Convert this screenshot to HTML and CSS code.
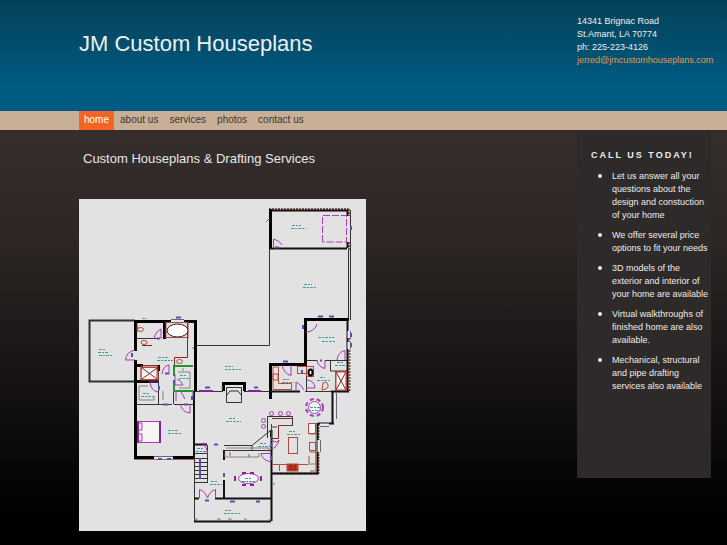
FILE: index.html
```html
<!DOCTYPE html>
<html lang="en">
<head>
<meta charset="utf-8">
<title>JM Custom Houseplans</title>
<meta name="viewport" content="width=device-width, initial-scale=1">
<link rel="stylesheet" href="styles.css">
</head>
<body>
<header class="header wrap">
  <h1 class="site-title">JM Custom Houseplans</h1>
  <address class="contact">
    14341 Brignac Road<br>
    St.Amant, LA 70774<br>
    ph: 225-223-4126<br>
    <a href="mailto:jerred@jmcustomhouseplans.com">jerred@jmcustomhouseplans.com</a>
  </address>
</header>
<nav class="nav">
  <ul class="wrap nav-list">
    <li><a class="active" href="#">home</a></li>
    <li><a href="#">about us</a></li>
    <li><a href="#">services</a></li>
    <li><a href="#">photos</a></li>
    <li><a href="#">contact us</a></li>
  </ul>
</nav>
<div class="page wrap">
  <main class="content">
    <h2 class="tagline">Custom Houseplans &amp; Drafting Services</h2>
    <svg class="plan" viewBox="79 199 287 332" role="img" aria-label="Floor plan">
      <rect class="paper" x="79" y="199" width="287" height="332"/>
      <!-- rear porch and patio outlines -->
      <g class="thin">
        <path class="porch" d="M135 320.500H89.500V381.500H135"/>
        <path d="M196 345.500H269.500V248M194.500 391V521M348.500 248V320M350.500 210V320"/>
        <path d="M158 404.500H172M174 404.500H194M135 404.500H158.500V365M173.500 391V404M135 365.500H158M135 338.500H157"/>
        <path d="M306 360.500H317M325 360.500H347M330.500 360V371H347M306.500 365V391M195 391.500H223M244 391.500H270M270 391.500H295M305 391.500H349"/>
        <path d="M224 445.500H252L271 430M223 450.500H271M252 446V450M194 444.500H207M194 453.500H208M207.500 445V483"/>
        <path d="M195 458.500H207M195 462.500H207M195 466.500H207M195 470.500H207M195 474.500H207M195 478.500H207M195 482.500H208"/>
      </g>
      <!-- hatched brick walls -->
      <g class="brick">
        <path d="M269 209H350M349 209V216M349 242V250M349.500 332V392M271 473.500H319M318.500 424V474"/>
      </g>
      <!-- main walls -->
      <g class="wall">
        <path d="M134 321.500H195.500V391M135.500 321V351M135.500 360V457.500H194M164.500 322V339M135 365.500H143M158.500 365V371M135 381.500H158"/>
        <path d="M270.500 209V248.500M305.500 319V364.500H269M270.500 364V399M304 319.500H349M223.500 391V383.500H244.500V391"/>
      </g>
      <path class="brick-line" d="M134 459.500H194"/>
      <g class="mid">
        <path d="M270 210.500H348M269 248.500H347M347.500 210V216M347.500 242V248M347.500 319V392M269 391.500H300M331 391.500H349M332.500 391V423M318 423.500H334M317.500 423V473.500H271M271.500 430V521M194 521.500H271M194 498.500H199M215 498.500H271M224 450V460M224 480V498M194 444.500H207M194 391V457M271 430V437"/>
      </g>
      <!-- windows -->
      <g class="window">
        <path d="M171 320.500H184M154 457.500H173M349 331V338M349 342V349M335.500 395V401M335.500 404V410M335.500 413V419M319 440V452M320 425H329"/>
      </g>
      <g class="window-edge">
        <path d="M171 319.500H184M154 456.500H173M350.500 331V338M350.500 342V349M336.500 393V419M320.500 440V452M320 426.500H329"/>
      </g>
      <!-- walk-in closet -->
      <path class="green" d="M174 366H193M174 365V376M174 383V391H193.500"/>
      <path class="green-thin" d="M228 519H231V521M194 519H197V521M217 519H220V521M244 519H246V521M269 519V521M193 347V349M272 485L275 483M266 222L269 219"/>
      <path class="grey" d="M139 386V400H154V396M178 372H190V388H179M139 386H148M183 368V371M226 448H269V452M163 391V400M225 453V457H259V453M309 434H316V464H308M222 386V390"/>
      <!-- bathroom fixtures and kitchen cabinets -->
      <g class="red">
        <rect x="166" y="322.500" width="22" height="15"/>
        <path class="dark" d="M187.500 323V357.500H174.500V365M142 345.500H152M137 327V332M137 323V329"/>
        <rect class="white" x="141" y="367.500" width="16" height="12"/>
        <path d="M141 380H158V366H141Z"/>
        <path class="dark" d="M142 368L157 379M157 368L142 379"/>
        <ellipse cx="144" cy="342.500" rx="3" ry="2"/>
        <ellipse cx="140.500" cy="329.500" rx="3" ry="2"/>
        <ellipse cx="179.500" cy="361.500" rx="3" ry="2"/>
        <rect class="white" x="335.500" y="371.500" width="11" height="19"/>
        <path d="M336 372H346V390H336Z"/>
        <path class="dark" d="M336 372L346 390M346 372L336 390"/>
        <rect x="297.500" y="366.500" width="9" height="7"/>
        <rect x="306.500" y="366.500" width="7" height="10"/>
        <path d="M273 367V389.500H291.500V383.500H278.500V367ZM273 374H278V380H273Z"/>
        <path d="M322 390L323 383Q327 381 328 385T322 390"/>
        <rect x="288.500" y="437.500" width="9" height="16"/>
        <path class="dark" d="M272 418.500H292.500V425.500H278.500V438.500H271.500V424M272 427H277"/>
        <rect class="white" x="308.500" y="423.500" width="7" height="10"/>
        <rect x="309.500" y="442.500" width="6" height="8"/>
        <path d="M272 464.500H279.500V471M280 464.500H308M309 456V463M309.500 452H316V471H310M230 452V456M249 454V457"/>
        <rect class="stove" x="287" y="464" width="11" height="7"/>
        <path class="dark" d="M288 466H297M288 469H297M291 464V471M295 464V471"/>
      </g>
      <ellipse class="black" cx="310.500" cy="372.500" rx="2" ry="3"/>
      <ellipse class="tub" cx="177.500" cy="330.500" rx="10.500" ry="6.500"/>
      <!-- fireplace -->
      <path class="thin" d="M226.500 387.500H241.500V402.500H226.500ZM227 395L230 391H238L241 395"/>
      <path class="thin" d="M267.500 438V416.500H292.500V426"/>
      <!-- doors, beds, tables -->
      <g class="purple">
        <path d="M135 350Q126 352 125.500 360H135M154 339Q155 332 161 329V339M162 374Q163 366 169 365V374M158 382H150Q151 391 158 392M175 374V385H183Q181 380 177 379"/>
        <path d="M181 392L185 399M180 404Q183 413 190 413V404M176 392V401M193 392V400"/>
        <path d="M273.500 247V239Q279 240 282 245M282 365Q284 374 291 375.500V365M306 332H307Q315 331 317 324M317 360Q318 367 325 368.500V360M337 360Q338 352 345 350.500V360M307 380Q315 381 315 388H306M296 391V382Q301 384 304 390"/>
        <path class="dash" d="M322.500 242V215.500H346.500V242Z"/>
        <path d="M271 440Q278 444 279 440Q277 448 271 449M271 462Q262 460 261 453.500H271M199.500 498V489.500Q205 491 207.500 498Q210 491 215.500 489.500V498M202 444Q208 447 207 454"/>
        <circle cx="271.500" cy="413.500" r="2"/><circle cx="280.500" cy="413.500" r="2"/><circle cx="288.500" cy="413.500" r="2"/>
        <circle cx="263.500" cy="420.500" r="2"/><circle cx="263.500" cy="426.500" r="2"/>
        <ellipse class="white" cx="248.500" cy="478.500" rx="10" ry="5"/>
        <path class="bold" d="M242 473H246M250 473H254M242 485H246M250 485H254M235 476V481M261 476V481"/>
        <circle class="white" cx="314.500" cy="407.500" r="6"/>
        <circle class="chairs" cx="314.500" cy="407.500" r="8.500"/>
        <rect class="white" x="137.500" y="421.500" width="22" height="21"/>
        <path class="bold" d="M138 421V443M160 421V443"/>
        <path d="M139 423H142V430H139M139 434H142V441H139"/>
        <path class="bold" d="M199 391H213M248 391H261M202 444H205"/>
      </g>
      <!-- room and opening marks -->
      <g class="mark">
        <path d="M292 225.500H301M291 228.500H306M304 284.500H312M303 287.500H317M99 349.500H106M98 352.500H108M99 355.500H113M158 357.500H168M157 360.500H173M168 430.500H178M168 433.500H182M225 366.500H233M225 369.500H241M229 418.500H235M226 421.500H241M318 337.500H334M322 341.500H336M283 379.500H290M282 382.500H294M289 431.500H296M287 434.500H301M320 377.500H325M317 380.500H331M337 362.500H343M335 365.500H346M260 443.500H267M258 446.500H270M310 407.500H320M308 410.500H321M245 478.500H252M242 481.500H256M225 510.500H232M224 513.500H240M211 481.500H218M210 484.500H222M197 448.500H204M196 451.500H206M180 375.500H186M179 378.500H189M143 393.500H149M141 396.500H154M142 318.500H147"/>
      </g>
      <g class="code">
        <path d="M176 317.500H181M158 459H162M167 459H171M157 338.500H160M165 373.500H169M159 386V390M163 404.500H168M184 404.500H188M132 353V357M205 387.500H210M214 444.500H218M205 500.500H209M254 387.500H258M283 361.500H288M318 316.500H323M329 316.500H334M303 325V329M351 226V230M351 333V337M351 343V347M302 370V374M320 360.500H322M275 247.500H279M271 443V447M271 456V460M230 501.500H235M256 501.500H260M224 473V477M174 380V383M192 396V400M200 458V479"/>
      </g>
    </svg>
  </main>
  <aside class="sidebar">
    <h3>CALL US TODAY!</h3>
    <ul>
      <li>Let us answer all your questions about the design and constuction of your home</li>
      <li>We offer several price options to fit your needs</li>
      <li>3D models of the exterior and interior of your home are available</li>
      <li>Virtual walkthroughs of finished home are also available.</li>
      <li>Mechanical, structural and pipe drafting services also available</li>
    </ul>
  </aside>
</div>
</body>
</html>
```
FILE: styles.css
```css
* {
  box-sizing: border-box;
}

html {
  background: #000;
}

body {
  margin: 0;
  color: #eee;
  font-family: "Liberation Sans", Arial, Helvetica, sans-serif;
  font-size: 9px;
  line-height: 13px;
}

h1, h2, h3, ul {
  margin: 0;
  padding: 0;
  font-weight: normal;
}

.wrap {
  padding-left: 79px;
  padding-right: 16px;
}

.header {
  display: grid;
  grid-template-columns: 1fr 134px;
  min-height: 111px;
  background: linear-gradient(#04425a 0, #04465f 15px, #005a82 85px, #005a82);
}

.site-title {
  padding-top: 31px;
  font-size: 22px;
  line-height: 26px;
}

.contact {
  padding-top: 15px;
  font-style: normal;
  white-space: nowrap;
}

.contact a {
  color: #e29a45;
  text-decoration: none;
}

.nav {
  background: #c8b098;
}

.nav-list {
  display: flex;
  gap: 1px;
  list-style: none;
}

.nav a {
  display: block;
  padding: 0 5px 1px;
  color: #40352d;
  font-size: 10px;
  line-height: 18px;
  text-decoration: none;
}

.nav a.active {
  background: #f26522;
  color: #fff;
}

.page {
  display: grid;
  grid-template-columns: 1fr 134px;
  align-items: start;
  padding-bottom: 14px;
  background: linear-gradient(#362e2c 0, #2d2625 110px, #000 390px);
}

.tagline {
  padding: 20px 4px 32px;
  font-size: 13px;
  line-height: 17px;
  color: #e8e8e8;
}

.plan {
  display: block;
  width: 100%;
  max-width: 287px;
}

.sidebar {
  min-height: 348px;
  padding: 19px 0 0 14px;
  background: #2e2a2a;
}

.sidebar h3 {
  font-size: 9px;
  font-weight: bold;
  letter-spacing: 2px;
  white-space: nowrap;
}

.sidebar ul {
  display: grid;
  gap: 6px;
  padding: 7px 0 0 21px;
}

.sidebar li::marker {
  font-size: 12px;
}

.plan path, .plan rect, .plan circle, .plan ellipse {
  fill: none;
}

.plan .paper { fill: #e2e2e2; }
.plan .white { fill: #f6f6f6; }
.thin, path.thin { stroke: #333; stroke-width: 1; }
.porch { stroke: #2c3330; stroke-width: 2; }
.wall { stroke: #000; stroke-width: 3; }
.mid { stroke: #111; stroke-width: 2; }
.brick { stroke: #86544c; stroke-width: 2; stroke-dasharray: 2 1; }
.brick-line { stroke: #a06a64; stroke-width: 1; }
.window { stroke: #e8e8f4; stroke-width: 3; }
.window-edge { stroke: #667; stroke-width: 1; }
.green { stroke: #22962e; stroke-width: 2; }
.green-thin { stroke: #3a9a50; stroke-width: 1; }
.grey { stroke: #85857c; stroke-width: 1; }
.red { stroke: #b5483f; stroke-width: 1; }
.red .dark { stroke: #7d2a22; }
.plan .stove { fill: #d03c18; }
.plan .tub { fill: #fff; stroke: #222; }
.plan .black { fill: #fff; stroke: #000; stroke-width: 2; }
.purple { stroke: #a73bb0; stroke-width: 1; }
.purple .bold { stroke: #8d1f96; stroke-width: 2; }
.purple .chairs { stroke-width: 2; stroke-dasharray: 4 3; }
.purple .dash { stroke: #b43bbb; stroke-dasharray: 7 2; }
.mark { stroke: #459b98; stroke-width: 1; stroke-dasharray: 3 1 2 1; }
.code { stroke: #5252b4; stroke-width: 2; }
```
